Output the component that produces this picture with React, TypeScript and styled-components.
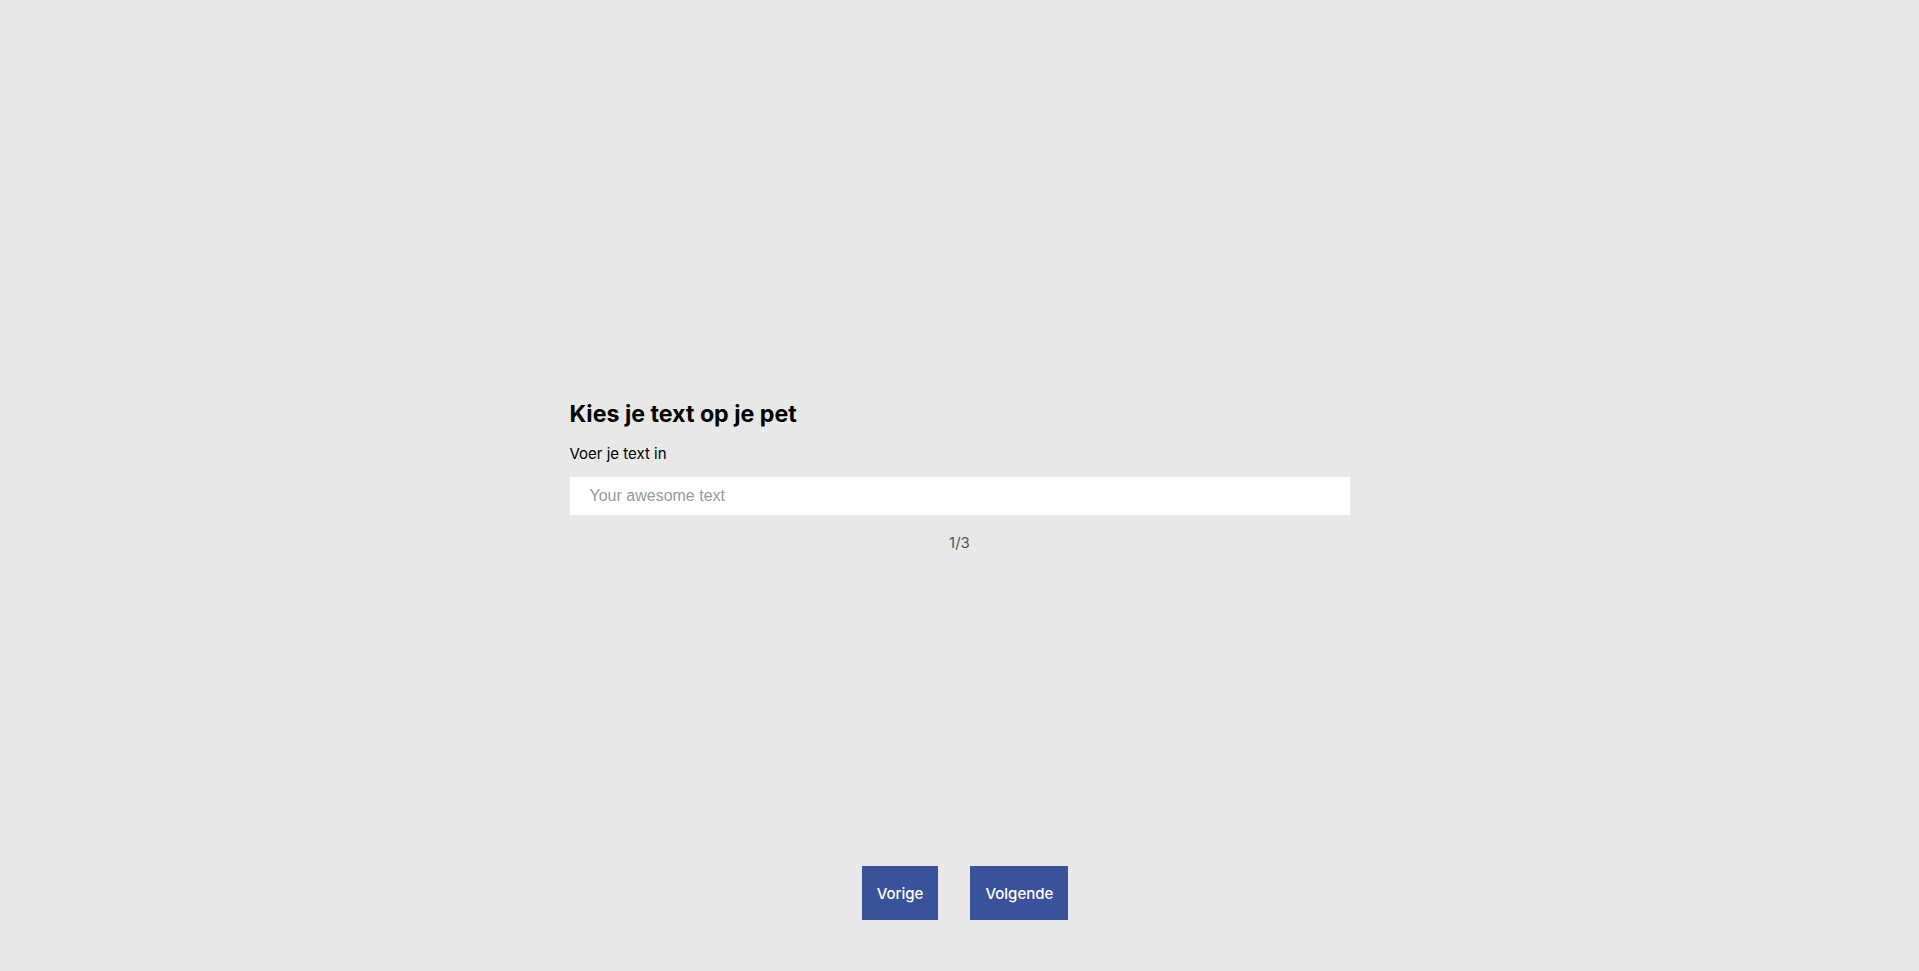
import React from "react";
import styled, { createGlobalStyle } from "styled-components";

const Global = createGlobalStyle`
  html, body { margin: 0; padding: 0; background: #e8e8e8; }
  * { box-sizing: border-box; }
`;

const Page = styled.div`
  min-height: 100vh;
  display: flex;
  flex-direction: column;
  align-items: center;
  font-family: "Inter", "Liberation Sans", sans-serif;
`;

const Main = styled.main`
  flex: 1;
  width: 780px;
  padding-top: 399px;
  display: flex;
  flex-direction: column;
`;

const Title = styled.h1`
  margin: 0;
  font-size: 23.2px;
  line-height: 30px;
  font-weight: 700;
  color: #000;
`;

const Label = styled.label`
  margin-top: 15px;
  font-size: 15px;
  line-height: 20px;
  color: #000;
`;

const Input = styled.input`
  margin-top: 13px;
  width: 100%;
  height: 38px;
  border: none;
  outline: none;
  background: #fff;
  padding: 0 20px;
  font-family: "Liberation Sans", Arial, sans-serif;
  font-size: 16px;
  color: #222;
  &::placeholder { color: #9a9a9a; }
`;

const Counter = styled.div`
  margin-top: 19px;
  text-align: center;
  font-size: 15px;
  line-height: 18px;
  color: #555;
`;

const Footer = styled.nav`
  display: flex;
  gap: 32px;
  padding-bottom: 51px;
  margin-left: 11px;
`;

const NavButton = styled.button`
  height: 54px;
  padding: 0 15px;
  border: none;
  background: #3a5299;
  color: #fff;
  font-family: "Inter", "Liberation Sans", sans-serif;
  font-weight: 500;
  font-size: 15px;
  cursor: pointer;
`;

export default function App() {
  return (
    <Page>
      <Global />
      <Main>
        <Title>Kies je text op je pet</Title>
        <Label htmlFor="cap-text">Voer je text in</Label>
        <Input id="cap-text" placeholder="Your awesome text" />
        <Counter>1/3</Counter>
      </Main>
      <Footer>
        <NavButton>Vorige</NavButton>
        <NavButton>Volgende</NavButton>
      </Footer>
    </Page>
  );
}
